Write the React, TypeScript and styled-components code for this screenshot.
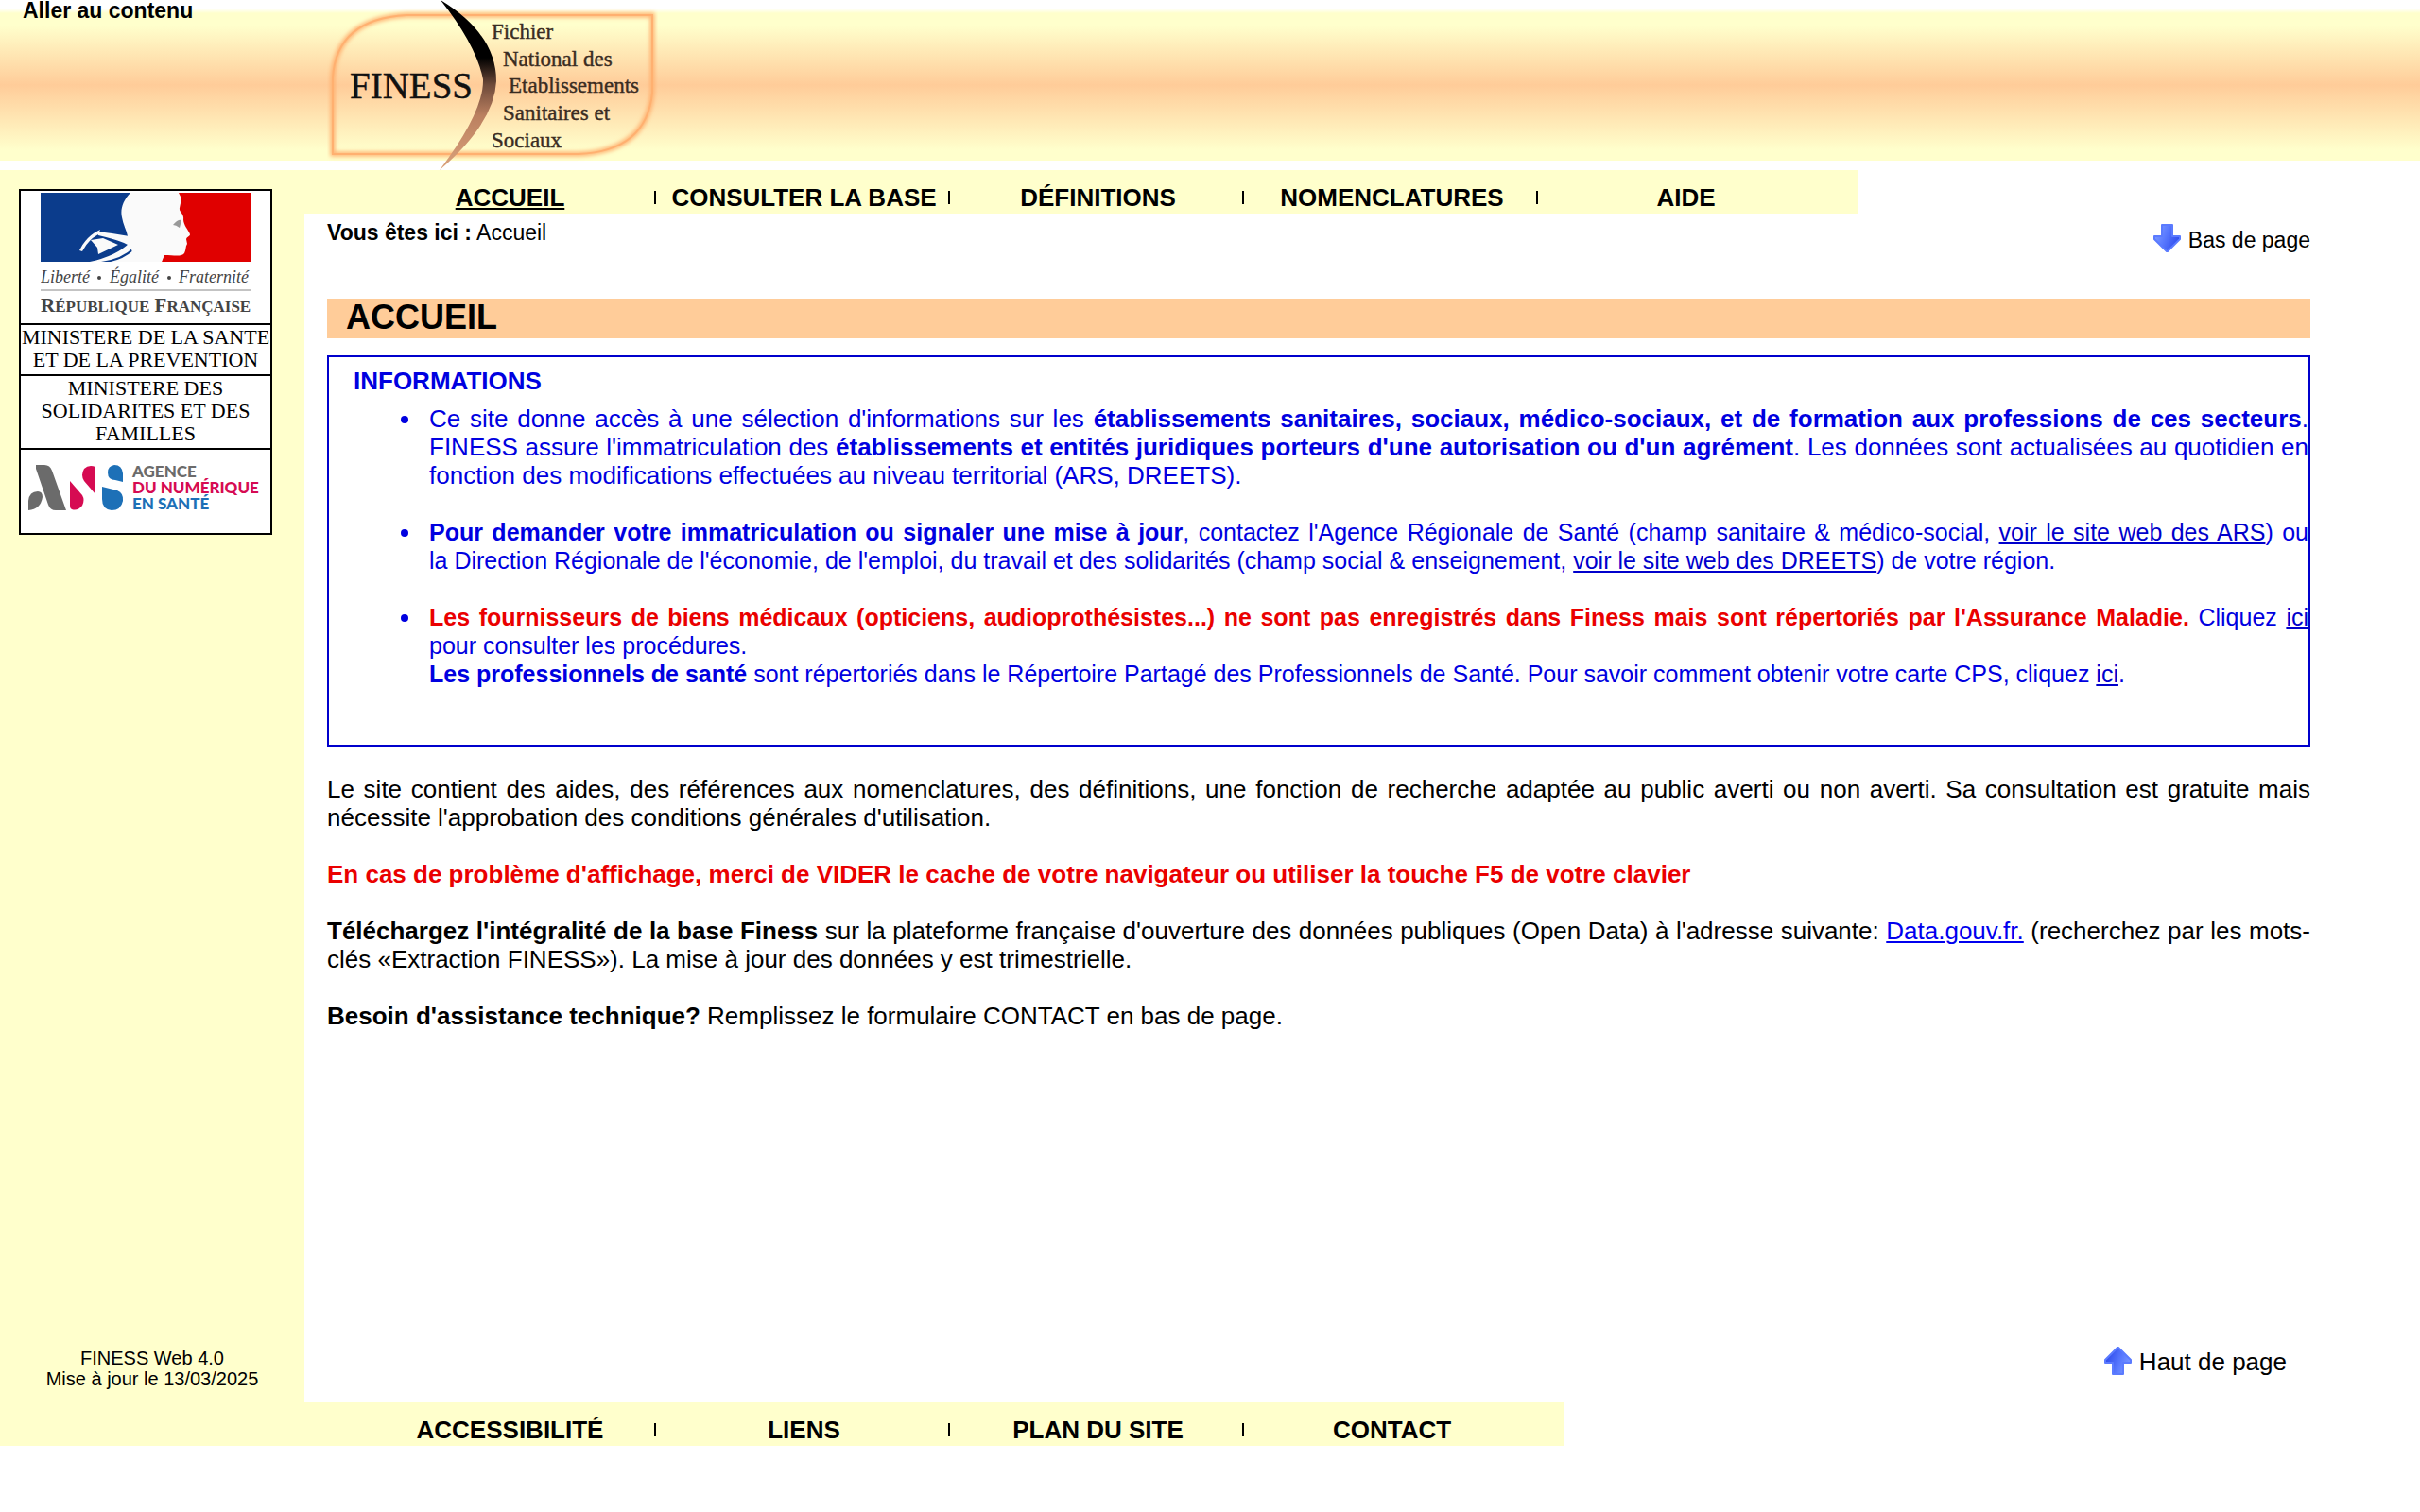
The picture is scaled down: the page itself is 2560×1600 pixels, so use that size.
import React from "react";
import styled, { createGlobalStyle, css } from "styled-components";

const sans = `"Liberation Sans", Arial, sans-serif`;
const serif = `"Liberation Serif", "Times New Roman", serif`;

const GlobalStyle = createGlobalStyle`
  *, *::before, *::after { box-sizing: border-box; }
  body {
    margin: 0;
    background: #fff;
    color: #000;
    font: 26px/30px ${sans};
  }
  p, h1, h2, ul { margin: 0; padding: 0; }
`;

const Page = styled.div`
  display: flex;
  flex-direction: column;
  min-height: 100vh;
  padding-bottom: 70px;
`;

const Header = styled.header`
  display: flex;
  align-items: flex-start;
  height: 180px;
  background: linear-gradient(to bottom, #fff 0, #ffffcc 5px, #ffffcc 18px, #ffcc99 81px, #ffffcc 150px) 0 9px / 100% 161px
    no-repeat;
`;

const SkipLink = styled.a`
  width: 322px;
  padding-left: 24px;
  font-size: 23px;
  line-height: 22px;
  font-weight: bold;
  color: #000;
  text-decoration: none;
`;

const Logo = styled.svg`
  display: block;
  margin-left: 24px;
`;

const Body = styled.div`
  flex: 1;
  display: grid;
  grid-template-columns: 322px 1fr;
  grid-template-rows: auto 1fr auto;
`;

const Sidebar = styled.aside`
  grid-row: 1 / 3;
  display: flex;
  flex-direction: column;
  justify-content: space-between;
  background: #ffffcc;
  padding: 20px 0 14px;
`;

const Ministries = styled.div`
  width: 268px;
  margin-left: 20px;
  border: 2px solid #000;
  background: #fff;
  font: 22px/24px ${serif};
  text-align: center;
`;

const Cell = styled.div`
  padding: 1px 0 3px;
  & + & {
    border-top: 2px solid #000;
  }
  svg {
    display: block;
    margin: 0 auto;
  }
`;

const Version = styled.p`
  font-size: 20px;
  line-height: 22px;
  text-align: center;
`;

const Nav = styled.nav<{ $wide?: boolean }>`
  display: flex;
  justify-self: start;
  background: #ffffcc;
  padding: 14px 27px 2px 62px;
  ${(p) =>
    p.$wide &&
    css`
      grid-column: 1 / 3;
      padding-left: 384px;
    `}
`;

const NavItem = styled.div`
  display: flex;
  align-items: center;
  width: 311px;
  &:not(:last-child)::after {
    content: "";
    width: 2px;
    height: 14px;
    margin: 0 1px 0 -3px;
    background: #000;
  }
`;

const NavLink = styled.a<{ $current?: boolean }>`
  flex: 1;
  text-align: center;
  white-space: nowrap;
  font-weight: bold;
  color: #000;
  text-decoration: ${(p) => (p.$current ? "underline" : "none")};
`;

const Main = styled.main`
  display: flex;
  flex-direction: column;
  padding: 0 116px 0 24px;
`;

const TopRow = styled.div`
  display: flex;
  justify-content: space-between;
  align-items: flex-start;
  height: 90px;
  font-size: 23px;
  line-height: 26px;
  padding-top: 7px;
`;

const JumpLink = styled.a<{ $bottom?: boolean }>`
  display: flex;
  align-items: flex-start;
  gap: 8px;
  color: #000;
  text-decoration: none;
  margin-top: 4px;
  span {
    padding-top: 4px;
  }
  ${(p) =>
    p.$bottom &&
    css`
      align-self: flex-end;
      margin: auto 25px 28px 0;
      span {
        padding-top: 1px;
      }
    `}
`;

const Title = styled.h1`
  background: #ffcc99;
  padding: 0 20px 2px;
  font-size: 36px;
  line-height: 40px;
`;

const Info = styled.section`
  margin-top: 18px;
  border: 2px solid #0000cc;
  color: #0000e0;
  padding: 10px 0 60px 26px;
  text-align: justify;
  a {
    color: #0000cc;
  }
  h2 {
    font-size: 26px;
    line-height: 30px;
  }
`;

const BulletList = styled.ul`
  margin-top: 10px;
  padding-left: 80px;
  list-style: none;
`;

const Bullet = styled.li<{ $compact?: boolean }>`
  font-size: ${(p) => (p.$compact ? 25 : 26)}px;
  & + & {
    margin-top: 30px;
  }
  &::before {
    content: "";
    float: left;
    width: 8px;
    height: 8px;
    margin: 12px 0 0 -30px;
    border-radius: 50%;
    background: #0000e0;
  }
`;

const Text = styled.p`
  margin-top: 30px;
  text-align: justify;
`;

const Alert = styled.strong`
  color: #ea0000;
`;

const Arrow = ({ up }: { up?: boolean }) => (
  <svg width="29" height="30" viewBox="0 0 29 30" aria-hidden="true">
    <defs>
      <linearGradient id={up ? "arrowUp" : "arrowDown"} x1="0" y1="0" x2="1" y2="0.4">
        <stop offset="0" stopColor="#86a4ff" />
        <stop offset="0.5" stopColor="#5b7bff" />
        <stop offset="1" stopColor="#3350ee" />
      </linearGradient>
    </defs>
    <path
      d="M9 1H20V13H28V16L15 29H14L1 16V13H9Z"
      transform={up ? "rotate(180 14.5 15)" : undefined}
      fill={`url(#${up ? "arrowUp" : "arrowDown"})`}
      stroke="#5b7bff"
      strokeWidth="2"
      strokeLinejoin="round"
    />
  </svg>
);

const FinessLogo = () => (
  <Logo width="350" height="180" viewBox="346 0 350 180" role="img" aria-label="FINESS">
    <defs>
      <linearGradient id="swoosh" x1="0" y1="0" x2="0" y2="1">
        <stop offset="0.34" stopColor="#000" />
        <stop offset="0.5" stopColor="#6e4a3a" />
        <stop offset="0.68" stopColor="#bb8060" />
        <stop offset="1" stopColor="#dba37b" />
      </linearGradient>
      <filter id="glow" x="-5%" y="-5%" width="110%" height="110%">
        <feGaussianBlur stdDeviation="2" />
      </filter>
    </defs>
    <g fill="none" stroke="#ffb070">
      <path d="M352 163V82Q356 20 430 16H690V98Q684 160 612 163Z" strokeWidth="5" filter="url(#glow)" />
      <path d="M352 163V82Q356 20 430 16H690V98Q684 160 612 163Z" strokeWidth="2" />
    </g>
    <path d="M466 0Q525 36 525 86Q523 130 465 180Q512 118 511 84Q504 48 466 0Z" fill="url(#swoosh)" />
    <g fontFamily={serif} fill="#111" stroke="#111" strokeWidth="0.4">
      <text x="370" y="104" fontSize="39">FINESS</text>
      <g fontSize="23" fill="#3a2c22" stroke="#3a2c22">
        <text x="520" y="41">Fichier</text>
        <text x="532" y="70">National des</text>
        <text x="538" y="98">Etablissements</text>
        <text x="532" y="127">Sanitaires et</text>
        <text x="520" y="156">Sociaux</text>
      </g>
    </g>
  </Logo>
);

const RepublicLogo = () => (
  <svg width="222" height="136" viewBox="0 -1 222 136" role="img" aria-label="République Française">
    <path d="M0 0H97V73H0Z" fill="#0b3c8c" />
    <path d="M141 0H222V73H128Z" fill="#e00000" />
    <path
      d="M95 0C87 8 84 18 86 26C87 33 91 40 92 46L96 60L100 73H128L131 66C141 66 149 68 152 64C154 60 153 57 155 54L154 49C155 46 158 46 158 44C156 39 151 34 151 28C152 22 146 20 147 16L149 6L146 0Z"
      fill="#fafafa"
    />
    <g fill="#fafafa">
      <path d="M41 61Q48 46 63 39L61 44Q50 50 44 62Z" />
      <path d="M53 50L66 48L82 55L61 65L60 58Z" />
      <path d="M60 41Q78 43 94 46V56Q84 50 61 45Z" />
      <path d="M94 53Q80 67 52 73H64Q86 70 98 58Z" />
      <path d="M98 61Q88 70 74 73H102Z" />
    </g>
    <path d="M140 34Q145 28 149 29L147 37Q143 34 140 34Z" fill="#999" />
    <path d="M0 103H222" stroke="#888" strokeWidth="1" />
    <g fontFamily={serif} fill="#444">
      <g fontSize="18" fontStyle="italic">
        <text x="0" y="95">Liberté</text>
        <text x="73" y="95">Égalité</text>
        <text x="146" y="95">Fraternité</text>
      </g>
      <circle cx="62" cy="90" r="2" />
      <circle cx="136" cy="90" r="2" />
      <text x="0" y="126" fontSize="21" fontWeight="bold">
        R<tspan fontSize="17">ÉPUBLIQUE</tspan> F<tspan fontSize="17">RANÇAISE</tspan>
      </text>
    </g>
  </svg>
);

const AnsLogo = () => (
  <svg width="252" height="84" viewBox="0 -1 252 84" role="img" aria-label="Agence du numérique en santé">
    <path d="M10 14H19Q25 14 27 20L42 62H31Q25 62 23 56L10 18Z" fill="#6b6b6b" />
    <path d="M2 62V52Q3 42 12 42Q17 42 17 48Q15 61 2 62Z" fill="#6b6b6b" />
    <path d="M46 31L59 46Q62 51 59 57Q54 63 48 61Q46 60 46 57Z" fill="#d60b52" />
    <path d="M73 45L61 31Q57 25 61 18Q66 13 73 16Z" fill="#d60b52" />
    <path d="M102 32V23Q101 14 93 14Q86 15 86 22Q86 30 94 30Z" fill="#1d70b7" />
    <path d="M80 37L96 41Q103 44 102 52Q100 62 90 62Q80 61 80 50Z" fill="#1d70b7" />
    <g fontFamily="Lato, sans-serif" fontWeight="900" fontSize="17">
      <text x="112" y="27" fill="#6b6b6b">AGENCE</text>
      <text x="112" y="44" fill="#d60b52">DU NUMÉRIQUE</text>
      <text x="112" y="61" fill="#1d70b7">EN SANTÉ</text>
    </g>
  </svg>
);

const topLinks = ["ACCUEIL", "CONSULTER LA BASE", "DÉFINITIONS", "NOMENCLATURES", "AIDE"];
const bottomLinks = ["ACCESSIBILITÉ", "LIENS", "PLAN DU SITE", "CONTACT"];

export default function App() {
  return (
    <Page id="haut">
      <GlobalStyle />
      <Header>
        <SkipLink href="#contenu">Aller au contenu</SkipLink>
        <FinessLogo />
      </Header>
      <Body>
        <Sidebar>
          <Ministries>
            <Cell>
              <RepublicLogo />
            </Cell>
            <Cell>MINISTERE DE LA SANTE ET DE LA PREVENTION</Cell>
            <Cell>MINISTERE DES SOLIDARITES ET DES FAMILLES</Cell>
            <Cell>
              <AnsLogo />
            </Cell>
          </Ministries>
          <Version>
            FINESS Web 4.0
            <br />
            Mise à jour le 13/03/2025
          </Version>
        </Sidebar>
        <Nav aria-label="Menu principal">
          {topLinks.map((label, i) => (
            <NavItem key={label}>
              <NavLink href="#" $current={i === 0}>
                {label}
              </NavLink>
            </NavItem>
          ))}
        </Nav>
        <Main id="contenu">
          <TopRow>
            <p>
              <strong>Vous êtes ici :</strong> Accueil
            </p>
            <JumpLink href="#bas">
              <Arrow />
              <span>Bas de page</span>
            </JumpLink>
          </TopRow>
          <Title>ACCUEIL</Title>
          <Info>
            <h2>INFORMATIONS</h2>
            <BulletList>
              <Bullet>
                Ce site donne accès à une sélection d'informations sur les{" "}
                <strong>établissements sanitaires, sociaux, médico-sociaux, et de formation aux professions de ces secteurs</strong>.
                FINESS assure l'immatriculation des{" "}
                <strong>établissements et entités juridiques porteurs d'une autorisation ou d'un agrément</strong>. Les données sont
                actualisées au quotidien en fonction des modifications effectuées au niveau territorial (ARS, DREETS).
              </Bullet>
              <Bullet $compact>
                <strong>Pour demander votre immatriculation ou signaler une mise à jour</strong>, contactez l'Agence Régionale de
                Santé (champ sanitaire &amp; médico-social, <a href="#">voir le site web des ARS</a>) ou la&nbsp;Direction Régionale
                de l'économie, de l'emploi, du travail et des solidarités (champ social &amp; enseignement,{" "}
                <a href="#">voir le site web des DREETS</a>) de votre région.
              </Bullet>
              <Bullet $compact>
                <Alert>
                  Les fournisseurs de biens médicaux (opticiens, audioprothésistes...) ne sont pas enregistrés dans Finess mais sont
                  répertoriés par l'Assurance Maladie.
                </Alert>{" "}
                Cliquez <a href="#">ici</a> pour&nbsp;consulter les procédures.
                <br />
                <strong>Les professionnels de santé</strong> sont répertoriés dans le Répertoire Partagé des Professionnels de Santé.
                Pour savoir comment obtenir votre carte CPS, cliquez <a href="#">ici</a>.
              </Bullet>
            </BulletList>
          </Info>
          <Text>
            Le site contient des aides, des références aux nomenclatures, des définitions, une fonction de recherche adaptée au public
            averti ou non averti. Sa consultation est gratuite mais nécessite l'approbation des conditions générales d'utilisation.
          </Text>
          <Text>
            <Alert>
              En cas de problème d'affichage, merci de VIDER le cache de votre navigateur ou utiliser la touche F5 de votre clavier
            </Alert>
          </Text>
          <Text>
            <strong>Téléchargez l'intégralité de la base Finess</strong> sur la plateforme française d'ouverture des données publiques
            (Open Data) à l'adresse suivante: <a href="#">Data.gouv.fr.</a> (recherchez par les mots-clés «Extraction FINESS»). La mise
            à jour des données y est trimestrielle.
          </Text>
          <Text>
            <strong>Besoin d'assistance technique?</strong> Remplissez le formulaire CONTACT en bas de page.
          </Text>
          <JumpLink href="#haut" $bottom>
            <Arrow up />
            <span>Haut de page</span>
          </JumpLink>
        </Main>
        <Nav $wide id="bas" aria-label="Pied de page">
          {bottomLinks.map((label) => (
            <NavItem key={label}>
              <NavLink href="#">{label}</NavLink>
            </NavItem>
          ))}
        </Nav>
      </Body>
    </Page>
  );
}
